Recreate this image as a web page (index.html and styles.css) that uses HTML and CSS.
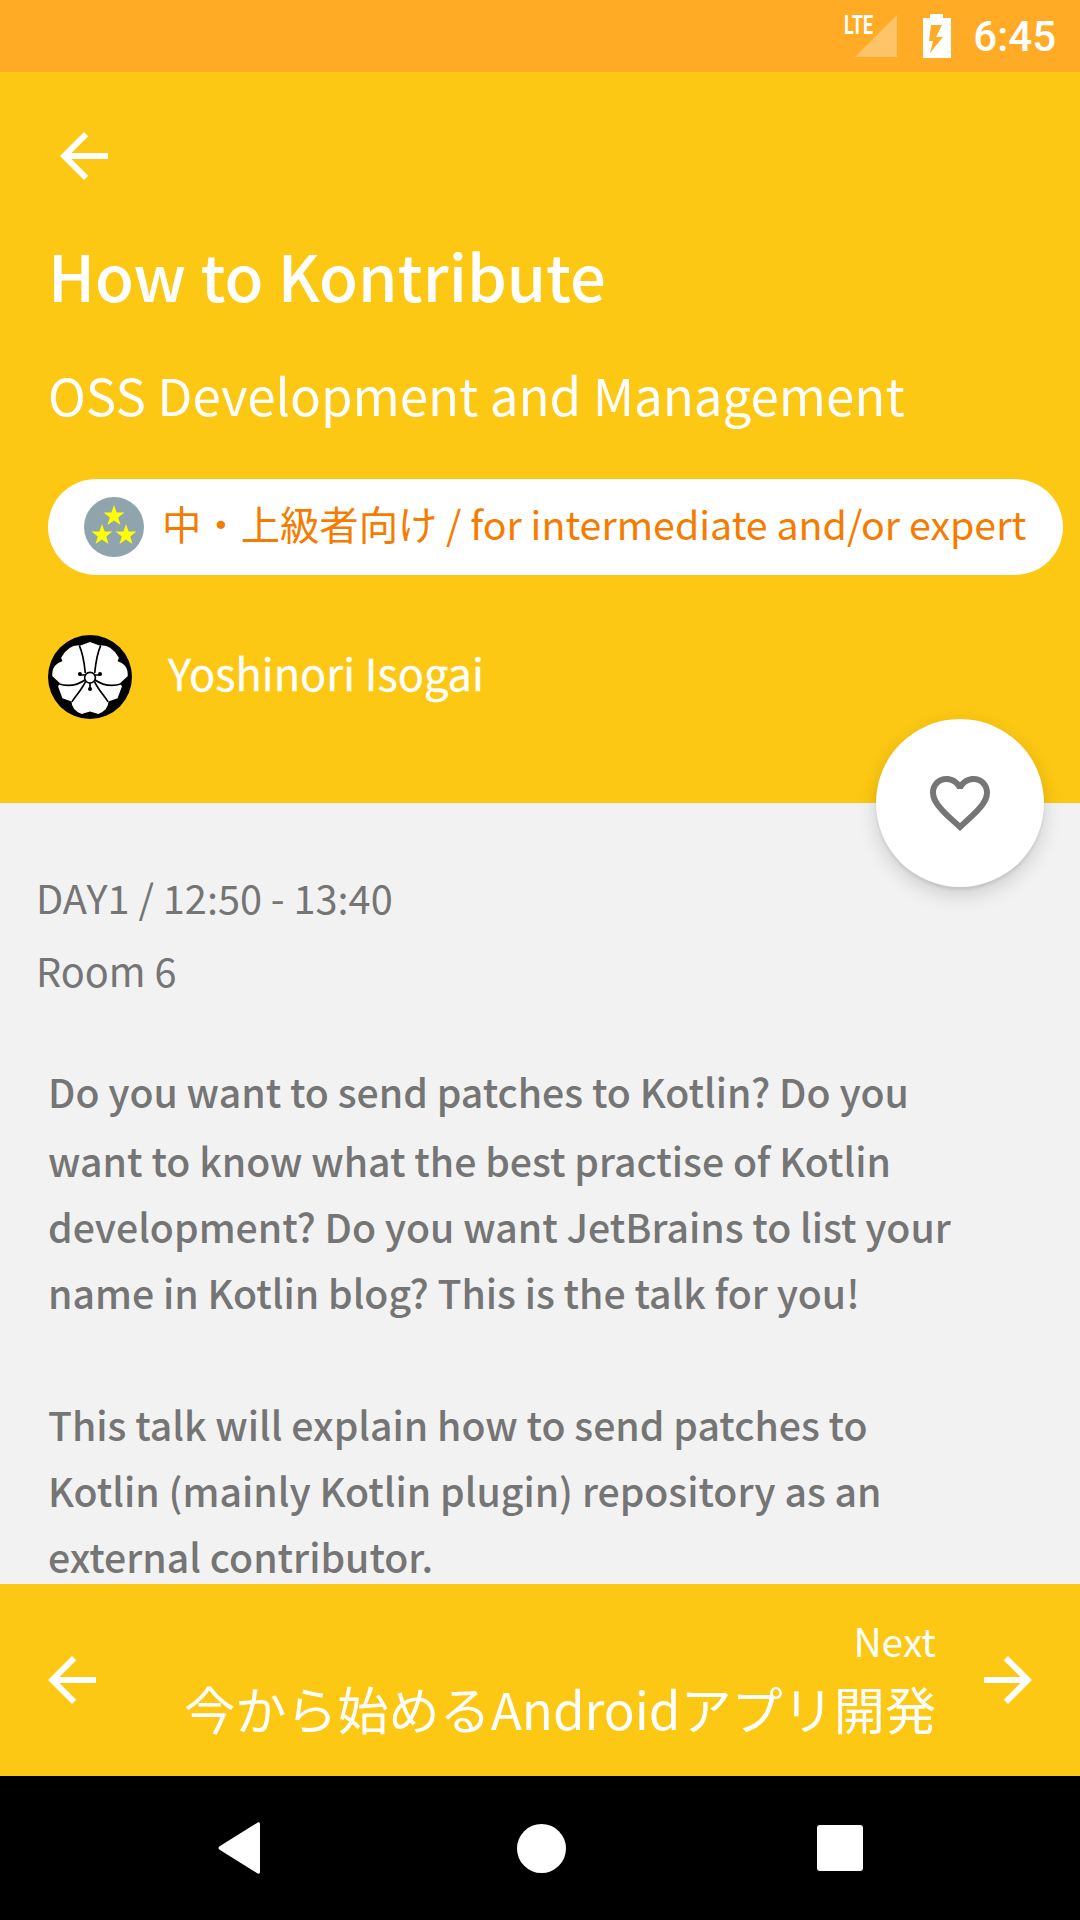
FILE: index.html
```html
<!DOCTYPE html>
<html lang="en">
<head>
<meta charset="UTF-8">
<meta name="viewport" content="width=device-width, initial-scale=1.0">
<title>How to Kontribute</title>
<link rel="stylesheet" href="styles.css">
</head>
<body>

<div class="screen">
    <div class="status-bar">
        <div class="lte">
            <span class="lte-label">LTE</span>
            <svg class="signal" width="44" height="44" viewBox="0 0 44 44"><path d="M43 1V43H1Z" fill="#fff" fill-opacity="0.3"/></svg>
        </div>
        <svg class="battery" width="28" height="44" viewBox="0 0 28 44"><path d="M7 0H20V4H28V44H0V4H7Z" fill="#fff"/><path d="M8 11H19L13 23H20L7 39L10 27H6Z" fill="#ffab26"/></svg>
        <span class="clock">6:45</span>
    </div>

    <div class="header">
        <svg class="back" width="72" height="72" viewBox="0 0 24 24"><path d="M20 11H7.830l5.590-5.590L12 4l-8 8 8 8 1.410-1.410L7.830 13H20v-2z" fill="#fff"/></svg>
        <h1 class="title">How to Kontribute</h1>
        <div class="subtitle">OSS Development and Management</div>
        <div class="level">
            <svg class="level-icon" width="60" height="60" viewBox="0 0 60 60">
                <defs>
                    <path id="star" d="M0 -11L2.600 -3.600L10.500 -3.400L4.200 1.400L6.500 8.900L0 4.400L-6.500 8.900L-4.200 1.400L-10.500 -3.400L-2.600 -3.600Z" fill="#ffff00"/>
                </defs>
                <circle cx="30" cy="30" r="30" fill="#90a4ae"/>
                <use href="#star" x="30" y="19"/>
                <use href="#star" x="18" y="38"/>
                <use href="#star" x="42" y="38"/>
            </svg>
            <span class="level-text">中・上級者向け / for intermediate and/or expert</span>
        </div>
        <div class="speaker">
            <svg class="avatar" width="84" height="84" viewBox="25 27 250 250">
                <circle cx="150" cy="152" r="125" fill="#000"/>
                <path d="M150 48L178 58Q215 55 236 95L232 105Q265 115 262 150L240 170L245 180L232 215L205 225Q205 250 175 262L150 255L125 262Q95 250 95 225L68 215L55 180L60 170L38 150Q35 115 68 105L64 95Q85 55 122 58Z" fill="#fff"/>
                <path d="M136 140C133 110 128 80 118 58M164 140C167 110 172 80 182 58M137 165C125 190 110 205 96 226M163 165C175 190 190 205 204 226M136 160C110 178 85 182 56 172M164 160C190 178 215 182 244 172" fill="none" stroke="#000" stroke-width="5"/>
                <path d="M136 146H120M164 146H180M150 168V186" fill="none" stroke="#000" stroke-width="5"/>
                <circle cx="120" cy="143" r="6" fill="#000"/>
                <circle cx="180" cy="143" r="6" fill="#000"/>
                <circle cx="150" cy="188" r="6" fill="#000"/>
                <circle cx="150" cy="154" r="16" fill="#fff" stroke="#000" stroke-width="5"/>
            </svg>
            <span class="speaker-name">Yoshinori Isogai</span>
        </div>
    </div>

    <div class="content">
        <div class="fab">
            <svg width="72" height="72" viewBox="0 0 24 24"><path d="M16.500 3c-1.740 0-3.410.81-4.500 2.090C10.910 3.810 9.240 3 7.500 3 4.420 3 2 5.420 2 8.500c0 3.780 3.400 6.860 8.550 11.540L12 21.350l1.450-1.320C18.600 15.360 22 12.280 22 8.500 22 5.420 19.580 3 16.500 3zm-4.400 15.550l-.1.100-.1-.1C7.140 14.240 4 11.390 4 8.500 4 6.500 5.500 5 7.500 5c1.540 0 3.040.99 3.570 2.360h1.870C13.460 5.990 14.960 5 16.500 5c2 0 3.500 1.500 3.500 3.500 0 2.890-3.140 5.740-7.900 10.050z" fill="#757575"/></svg>
        </div>
        <div class="time">DAY1 / 12:50 - 13:40</div>
        <div class="room">Room 6</div>
        <div class="description">
            <p><span class="lead-line">Do you want to send patches to Kotlin? Do you</span>want to know what the best practise of Kotlin<br>development? Do you want JetBrains to list your<br>name in Kotlin blog? This is the talk for you!</p>
            <p>This talk will explain how to send patches to<br>Kotlin (mainly Kotlin plugin) repository as an<br>external contributor.</p>
        </div>
    </div>

    <div class="footer">
        <svg width="72" height="72" viewBox="0 0 24 24"><path d="M20 11H7.830l5.590-5.590L12 4l-8 8 8 8 1.410-1.410L7.830 13H20v-2z" fill="#fff"/></svg>
        <div class="next">
            <div class="next-label">Next</div>
            <div class="next-title">今から始めるAndroidアプリ開発</div>
        </div>
        <svg width="72" height="72" viewBox="0 0 24 24"><path d="M12 4l-1.410 1.410L16.170 11H4v2h12.170l-5.580 5.590L12 20l8-8z" fill="#fff"/></svg>
    </div>

    <div class="nav-bar">
        <svg width="48" height="52" viewBox="0 0 48 52"><path d="M43 2V50C43 52 41 52 40 51L3 28C1 27 1 25 3 24L40 1C41 0 43 0 43 2Z" fill="#fff"/></svg>
        <div class="nav-home"></div>
        <div class="nav-recent"></div>
    </div>
</div>

</body>
</html>
```

FILE: styles.css
```css
/* Session detail screen */
* {
    box-sizing: border-box;
}

body {
    margin: 0;
    font-family: "Noto Sans CJK JP", "Noto Sans", sans-serif;
}

.screen {
    width: 1080px;
    height: 1920px;
    display: flex;
    flex-direction: column;
    overflow: hidden;
    background-color: #f2f2f2;
}

.status-bar {
    height: 72px;
    flex-shrink: 0;
    display: flex;
    align-items: center;
    justify-content: flex-end;
    padding-right: 24px;
    background-color: #ffab26;
    color: #fff;
}

.lte {
    width: 44px;
    height: 44px;
    position: relative;
    margin-right: 25px;
}

.lte-label {
    position: absolute;
    left: -10px;
    top: 0;
    font-family: "Roboto", sans-serif;
    font-size: 25px;
    font-weight: 700;
    line-height: 24px;
    transform: scaleX(0.72);
    transform-origin: left top;
}

.signal {
    display: block;
}

.battery {
    margin-right: 22px;
}

.clock {
    font-family: "Roboto", sans-serif;
    font-size: 42px;
    font-weight: 500;
}

.header {
    height: 731px;
    flex-shrink: 0;
    padding: 48px 18px 0 48px;
    background-color: #fcc813;
    color: #fff;
}

.back {
    display: block;
}

.title {
    margin: 37px 0 0;
    font-size: 63.400px;
    font-weight: 500;
    line-height: 90px;
}

.subtitle {
    margin-top: 40px;
    font-size: 51px;
    line-height: 70px;
}

.level {
    display: flex;
    align-items: center;
    width: 1015px;
    height: 96px;
    margin-top: 50px;
    padding-left: 36px;
    border-radius: 48px;
    background-color: #fff;
}

.level-text {
    margin-left: 18px;
    padding-bottom: 10px;
    font-size: 39.350px;
    white-space: nowrap;
    color: #f57c00;
}

.speaker {
    display: flex;
    align-items: center;
    margin-top: 60px;
}

.speaker-name {
    margin-left: 36px;
    padding-bottom: 10px;
    font-size: 43.300px;
    -webkit-text-stroke: 0.3px #fff;
}

.content {
    flex: 1;
    min-height: 0;
    position: relative;
    padding-top: 57px;
    color: #757575;
}

.fab {
    position: absolute;
    left: 876px;
    top: -84px;
    width: 168px;
    height: 168px;
    display: flex;
    align-items: center;
    justify-content: center;
    border-radius: 50%;
    background-color: #fff;
    box-shadow: 0 3px 3px rgba(0, 0, 0, 0.08), 0 8px 20px rgba(0, 0, 0, 0.15);
}

.time,
.room {
    padding-left: 36px;
    font-size: 39.700px;
    line-height: 73px;
}

.description {
    margin-top: 52px;
    padding-left: 48px;
    font-size: 39.200px;
    font-weight: 500;
    line-height: 66px;
}

.description p {
    margin: 0 0 66px;
}

.lead-line {
    display: block;
    margin-bottom: 3px;
}

.footer {
    height: 192px;
    flex-shrink: 0;
    display: flex;
    align-items: center;
    padding: 0 36px;
    background-color: #fcc813;
    color: #fff;
}

.next {
    flex: 1;
    padding: 0 36px 6px 0;
    text-align: right;
}

.next-label {
    margin-bottom: 6px;
    font-size: 39px;
    line-height: 56px;
}

.next-title {
    font-size: 51.100px;
    line-height: 68px;
}

.nav-bar {
    height: 144px;
    flex-shrink: 0;
    display: flex;
    align-items: center;
    justify-content: space-between;
    padding: 0 217px;
    background-color: #000;
}

.nav-home {
    width: 49px;
    height: 49px;
    border-radius: 50%;
    background-color: #fff;
}

.nav-recent {
    width: 46px;
    height: 46px;
    border-radius: 3px;
    background-color: #fff;
}
```
